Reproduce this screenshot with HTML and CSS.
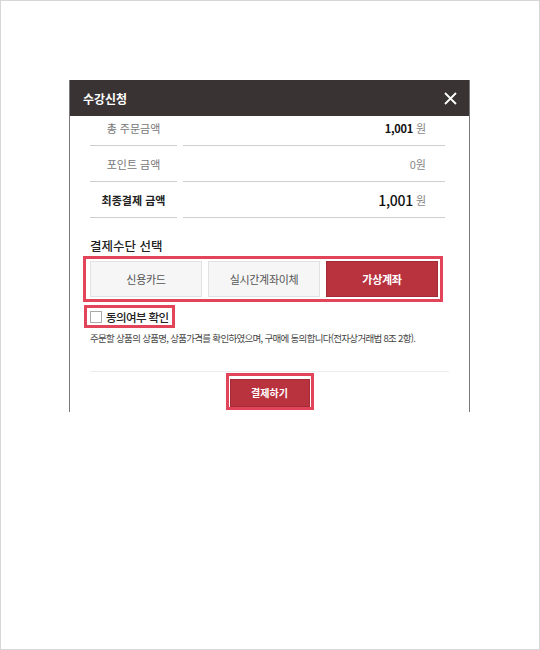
FILE: index.html
```html
<!DOCTYPE html>
<html lang="ko">
<head>
  <meta charset="UTF-8">
  <title>수강신청</title>
  <meta name="viewport" content="width=device-width, initial-scale=1.0">
  <link rel="stylesheet" href="styles.css">
</head>
<body>
  <div class="frame">
    <div class="modal">
      <div class="modal-head">
        <h2>수강신청</h2>
        <button class="close" aria-label="닫기">
          <svg width="13" height="13" viewBox="0 0 13 13"><path d="M1 1 L12 12 M12 1 L1 12" stroke="#fff" stroke-width="1.8" fill="none"/></svg>
        </button>
      </div>

      <div class="modal-body">
        <div class="price-table">
          <div class="row">
            <div class="label">총 주문금액</div>
            <div class="value"><strong>1,001</strong> <span class="won">원</span></div>
          </div>
          <div class="row">
            <div class="label">포인트 금액</div>
            <div class="value gray">0원</div>
          </div>
          <div class="row total">
            <div class="label">최종결제 금액</div>
            <div class="value"><strong>1,001</strong> <span class="won">원</span></div>
          </div>
        </div>

        <h3 class="section-title">결제수단 선택</h3>
        <div class="mark pay-mark">
          <div class="pay-methods">
            <button class="pay">신용카드</button>
            <button class="pay">실시간계좌이체</button>
            <button class="pay active">가상계좌</button>
          </div>
        </div>

        <div class="mark agree-mark">
          <label class="agree"><input type="checkbox"><span>동의여부 확인</span></label>
        </div>
        <p class="notice">주문할 상품의 상품명, 상품가격를 확인하였으며, 구매에 동의합니다(전자상거래법 8조 2항).</p>

        <div class="submit-area">
          <div class="mark submit-mark">
            <button class="submit">결제하기</button>
          </div>
        </div>
      </div>
    </div>
  </div>
</body>
</html>
```

FILE: styles.css
```css
* {
  box-sizing: border-box;
}

body {
  margin: 0;
  font-family: "Noto Sans CJK KR", "Noto Sans", sans-serif;
  color: #333;
  background: #fff;
}

.frame {
  width: 540px;
  height: 650px;
  border: 1px solid #d6d6d6;
  padding: 79px 0 0 68px;
}

.modal {
  width: 401px;
  height: 332px;
  overflow: hidden;
  border-left: 1px solid #7a7a7a;
  border-right: 1px solid #7a7a7a;
  background: #fff;
}

.modal-head {
  height: 36px;
  background: #3a3334;
  display: flex;
  align-items: center;
  justify-content: space-between;
  padding: 0 12px 0 13px;
}

.modal-head h2 {
  margin: 0;
  font-size: 12px;
  font-weight: bold;
  color: #fff;
}

.close {
  background: none;
  border: none;
  padding: 0;
  width: 13px;
  height: 13px;
  display: flex;
  cursor: pointer;
}

.modal-body {
  padding: 0 20px;
}

.price-table {
  margin-top: -6px;
  width: 355px;
}

.row {
  display: grid;
  grid-template-columns: 87px 1fr;
  column-gap: 6px;
  height: 36px;
}

.label,
.value {
  display: flex;
  align-items: center;
  border-bottom: 1px solid #cfcfcf;
  font-size: 11px;
}

.label {
  justify-content: center;
  color: #777;
}

.value {
  justify-content: flex-end;
  padding-right: 19px;
  gap: 3px;
  color: #111;
}

.value strong {
  font-weight: bold;
  letter-spacing: -0.3px;
}

.won,
.value.gray {
  color: #888;
}

.total .label {
  color: #222;
  font-weight: bold;
}

.total .value strong {
  font-size: 14px;
  font-weight: 500;
}

.section-title {
  margin: 20px 0 0;
  font-size: 12.5px;
  line-height: 16px;
  font-weight: 500;
  color: #222;
}

.mark {
  border: 3px solid #e2445a;
}

.pay-mark {
  margin: 2px 0 0 -7px;
  width: 360px;
  padding: 2px 2px 2px 4px;
}

.pay-methods {
  display: grid;
  grid-template-columns: repeat(3, 112px);
  column-gap: 6px;
}

.pay {
  height: 36px;
  border: 1px solid #e2e2e2;
  background: #f6f6f6;
  font-family: inherit;
  font-size: 11px;
  color: #555;
  padding: 0;
  letter-spacing: -0.3px;
}

.pay.active {
  background: #b9333f;
  border-color: #a32a36;
  color: #fff;
  font-weight: bold;
}

.agree-mark {
  display: inline-flex;
  margin: 3px 0 0 -6px;
  height: 23px;
  padding: 0 3px 0 3px;
  align-items: center;
}

.agree {
  display: flex;
  align-items: center;
  gap: 4px;
  font-size: 11.5px;
  font-weight: 500;
  color: #222;
  white-space: nowrap;
  letter-spacing: -0.6px;
}

.agree input {
  appearance: none;
  margin: 0;
  width: 12px;
  height: 12px;
  border: 1px solid #aaa;
  background: #fff;
}

.notice {
  margin: 3px 0 0;
  font-size: 9.5px;
  line-height: 14px;
  color: #444;
  letter-spacing: -0.7px;
  white-space: nowrap;
}

.submit-area {
  margin-top: 26px;
  border-top: 1px solid #ececec;
  padding-top: 1px;
  display: flex;
  justify-content: center;
}

.submit-mark {
  width: 88px;
  height: 37px;
  padding: 2px 0 0 1px;
}

.submit {
  width: 80px;
  height: 28px;
  border: 1px solid #a32a36;
  background: #b9333f;
  color: #fff;
  font-family: inherit;
  font-size: 10px;
  font-weight: bold;
  padding: 0;
}
```
